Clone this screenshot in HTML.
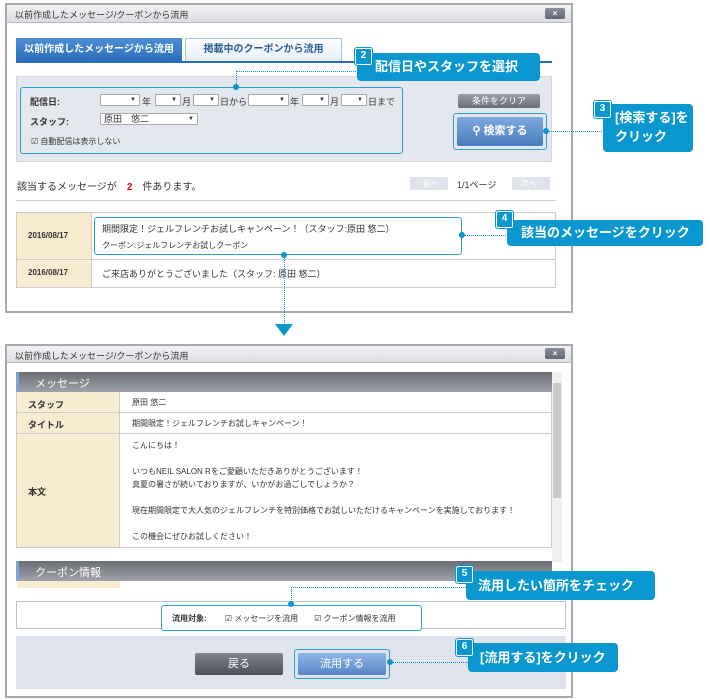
<!DOCTYPE html>
<html><head><meta charset="utf-8"><style>
*{margin:0;padding:0;box-sizing:border-box}
body{width:710px;height:700px;background:#fff;position:relative;overflow:hidden;font-family:"Liberation Sans","Noto Sans CJK JP",sans-serif;font-size:9px;color:#333}
.a{position:absolute}
.win{border:2px solid #a9aab0;background:#fff}
.tb{background:linear-gradient(#f3f3f5,#dcdde2);border-bottom:1px solid #b8b9c0;font-size:9px;padding:3px 0 0 8px;color:#333}
.x{background:linear-gradient(#8a8f9c,#5f6472);color:#fff;font-size:8px;text-align:center;border-radius:2px;line-height:11px;font-weight:bold}
.sel{border:1px solid #aaa;background:#fff;height:12px;font-size:6px;text-align:right;padding-right:3px;line-height:10px}
.co{background:#0a97cf;color:#fff;font-weight:bold;border-radius:4px;font-size:13px}
.bd{background:#0a97cf;border:1.5px solid #fff;color:#fff;font-weight:bold;font-size:10px;text-align:center;line-height:14px;width:17px;height:17px;border-radius:2px;outline:1px solid #0a97cf}
.dv{border-left:1px dotted #0a97cf}
.dh{border-top:1px dotted #0a97cf}
.dot{width:6px;height:6px;border-radius:3px;background:#0a97cf}
.hb{border:1.5px solid #2d9fd2;border-radius:3px}
.beige{background:#f8ecd0}
.gh{background:linear-gradient(#6b6e75,#9fa2a8);border-left:3px solid #7aa7d8;color:#fff;font-size:11px;padding:3px 0 0 16px}
</style></head><body>

<!-- window 1 -->
<div class="a win" style="left:5px;top:3px;width:568px;height:310px"></div>
<div class="a tb" style="left:7px;top:5px;width:564px;height:18px">以前作成したメッセージ/クーポンから流用</div>
<div class="a x" style="left:545px;top:8px;width:20px;height:11px">×</div>

<div class="a" style="left:16px;top:38px;width:166px;height:24px;background:linear-gradient(#4d8fd6,#2a6cb8);color:#fff;font-weight:bold;font-size:10px;text-align:center;line-height:24px">以前作成したメッセージから流用</div>
<div class="a" style="left:185px;top:38px;width:157px;height:24px;background:linear-gradient(#fff,#e3eefa);border:1px solid #9fc2e7;color:#2a5c98;font-weight:bold;font-size:10px;text-align:center;line-height:22px">掲載中のクーポンから流用</div>
<div class="a" style="left:16px;top:61px;width:536px;height:2px;background:#2a6cb8"></div>

<div class="a" style="left:16px;top:76px;width:536px;height:86px;background:#e4e7ee;border:1px solid #d2d6de"></div>
<div class="a hb" style="left:20px;top:87px;width:383px;height:67px"></div>
<div class="a" style="left:30px;top:95px;font-weight:bold">配信日:</div>
<div class="a sel" style="left:100px;top:94px;width:40px">▼</div><div class="a" style="left:142px;top:95px">年</div>
<div class="a sel" style="left:155px;top:94px;width:26px">▼</div><div class="a" style="left:182px;top:95px">月</div>
<div class="a sel" style="left:193px;top:94px;width:26px">▼</div><div class="a" style="left:220px;top:95px">日から</div>
<div class="a sel" style="left:248px;top:94px;width:41px">▼</div><div class="a" style="left:290px;top:95px">年</div>
<div class="a sel" style="left:302px;top:94px;width:27px">▼</div><div class="a" style="left:330px;top:95px">月</div>
<div class="a sel" style="left:341px;top:94px;width:26px">▼</div><div class="a" style="left:368px;top:95px">日まで</div>
<div class="a" style="left:30px;top:115px;font-weight:bold">スタッフ:</div>
<div class="a sel" style="left:100px;top:113px;width:98px;text-align:left;font-size:9px;padding-left:3px">原田　悠二<span style="position:absolute;right:3px;font-size:6px">▼</span></div>
<div class="a" style="left:31px;top:136px;font-size:8px">☑ 自動配信は表示しない</div>
<div class="a" style="left:458px;top:94px;width:82px;height:14px;background:linear-gradient(#9a9fab,#676c78);color:#fff;font-size:9px;text-align:center;line-height:14px;border-radius:2px">条件をクリア</div>
<div class="a hb" style="left:453px;top:113px;width:94px;height:37px"></div>
<div class="a" style="left:457px;top:117px;width:86px;height:29px;background:linear-gradient(#7fa8dc,#4a7cc0);color:#fff;font-size:11px;font-weight:bold;text-align:center;line-height:29px;border-radius:2px">⚲ 検索する</div>

<div class="a" style="left:17px;top:178px;font-size:10px">該当するメッセージが　<b style="color:#e00">2</b>　件あります。</div>
<div class="a" style="left:410px;top:177px;width:38px;height:13px;background:#dfe2ea;color:#fff;font-size:8px;text-align:center;line-height:13px">‹ 前へ</div>
<div class="a" style="left:457px;top:178px;font-size:9px">1/1ページ</div>
<div class="a" style="left:512px;top:177px;width:38px;height:13px;background:#dfe2ea;color:#fff;font-size:8px;text-align:center;line-height:13px">次へ ›</div>
<div class="a" style="left:16px;top:200px;width:540px;height:1px;background:#ccc"></div>

<div class="a" style="left:16px;top:212px;width:540px;height:76px;border:1px solid #ccc"></div>
<div class="a beige" style="left:17px;top:213px;width:74px;height:74px"></div>
<div class="a" style="left:17px;top:259px;width:538px;height:1px;background:#ccc"></div>
<div class="a" style="left:91px;top:213px;width:1px;height:74px;background:#ccc"></div>
<div class="a" style="left:28px;top:231px;font-weight:bold;font-size:8px">2016/08/17</div>
<div class="a" style="left:28px;top:268px;font-weight:bold;font-size:8px">2016/08/17</div>
<div class="a hb" style="left:94px;top:217px;width:368px;height:38px;background:#fff"></div>
<div class="a" style="left:102px;top:222px;font-size:9px">期間限定！ジェルフレンチお試しキャンペーン！（スタッフ:原田 悠二）</div>
<div class="a" style="left:102px;top:240px;font-size:8px">クーポン:ジェルフレンチお試しクーポン</div>
<div class="a" style="left:102px;top:267px;font-size:9px">ご来店ありがとうございました（スタッフ: 原田 悠二）</div>

<!-- callouts window1 -->
<div class="a dv" style="left:236px;top:71px;height:17px"></div>
<div class="a dh" style="left:236px;top:71px;width:120px"></div>
<div class="a dot" style="left:233px;top:84px"></div>
<div class="a co" style="left:357px;top:53px;width:183px;height:28px;line-height:28px;padding-left:18px">配信日やスタッフを選択</div>
<div class="a bd" style="left:355px;top:48px">2</div>
<div class="a dh" style="left:546px;top:131px;width:60px"></div>
<div class="a dot" style="left:543px;top:128px"></div>
<div class="a co" style="left:603px;top:104px;width:90px;height:48px;padding:4px 0 0 12px;line-height:19px">[検索する]を<br>クリック</div>
<div class="a bd" style="left:594px;top:101px">3</div>
<div class="a dh" style="left:462px;top:235px;width:48px"></div>
<div class="a dot" style="left:459px;top:232px"></div>
<div class="a co" style="left:507px;top:220px;width:196px;height:26px;line-height:26px;padding-left:14px">該当のメッセージをクリック</div>
<div class="a bd" style="left:496px;top:211px">4</div>
<div class="a dv" style="left:284px;top:255px;height:68px"></div>
<div class="a dot" style="left:281px;top:252px"></div>
<div class="a" style="left:275px;top:324px;width:0;height:0;border-left:9px solid transparent;border-right:9px solid transparent;border-top:12px solid #0a97cf"></div>

<!-- window 2 -->
<div class="a win" style="left:5px;top:344px;width:568px;height:354px"></div>
<div class="a tb" style="left:7px;top:346px;width:564px;height:17px">以前作成したメッセージ/クーポンから流用</div>
<div class="a x" style="left:545px;top:348px;width:20px;height:11px">×</div>

<div class="a gh" style="left:16px;top:372px;width:536px;height:20px">メッセージ</div>
<div class="a" style="left:552px;top:372px;width:10px;height:190px;background:#f0f0f0"></div>
<div class="a" style="left:553px;top:383px;width:8px;height:115px;background:#c8c8c8"></div>
<div class="a" style="left:16px;top:392px;width:536px;height:156px;border:1px solid #ccc;border-top:none"></div>
<div class="a beige" style="left:17px;top:392px;width:102px;height:155px"></div>
<div class="a" style="left:119px;top:392px;width:1px;height:155px;background:#ccc"></div>
<div class="a" style="left:17px;top:412px;width:535px;height:1px;background:#ccc"></div>
<div class="a" style="left:17px;top:433px;width:535px;height:1px;background:#ccc"></div>
<div class="a" style="left:28px;top:398px;font-weight:bold">スタッフ</div>
<div class="a" style="left:28px;top:418px;font-weight:bold">タイトル</div>
<div class="a" style="left:28px;top:485px;font-weight:bold">本文</div>
<div class="a" style="left:132px;top:397px;font-size:8px">原田 悠二</div>
<div class="a" style="left:132px;top:418px;font-size:8px">期間限定！ジェルフレンチお試しキャンペーン！</div>
<div class="a" style="left:132px;top:439px;line-height:13px;font-size:8px">こんにちは！<br><br>いつもNEIL SALON Rをご愛顧いただきありがとうございます！<br>真夏の暑さが続いておりますが、いかがお過ごしでしょうか？<br><br>現在期間限定で大人気のジェルフレンチを特別価格でお試しいただけるキャンペーンを実施しております！<br><br>この機会にぜひお試しください！</div>
<div class="a gh" style="left:16px;top:561px;width:536px;height:20px">クーポン情報</div>
<div class="a beige" style="left:17px;top:581px;width:103px;height:7px"></div>

<div class="a" style="left:16px;top:601px;width:550px;height:28px;border:1px solid #b8c4d6"></div>
<div class="a hb" style="left:161px;top:605px;width:261px;height:26px;background:#fff"></div>
<div class="a" style="left:172px;top:613px;font-size:8px"><b>流用対象:</b>　　 ☑ メッセージを流用　　☑ クーポン情報を流用</div>

<div class="a" style="left:16px;top:636px;width:550px;height:53px;background:#dfe3eb"></div>
<div class="a" style="left:195px;top:653px;width:88px;height:22px;background:linear-gradient(#808590,#4a4e58);color:#fff;font-size:11px;text-align:center;line-height:22px;border-radius:2px">戻る</div>
<div class="a hb" style="left:294px;top:649px;width:96px;height:30px"></div>
<div class="a" style="left:298px;top:653px;width:88px;height:22px;background:linear-gradient(#8fb5e6,#5686c8);color:#fff;font-size:11px;text-align:center;line-height:22px;border-radius:2px">流用する</div>

<div class="a dv" style="left:291px;top:587px;height:19px"></div>
<div class="a dh" style="left:291px;top:587px;width:175px"></div>
<div class="a dot" style="left:288px;top:601px"></div>
<div class="a co" style="left:466px;top:571px;width:189px;height:29px;line-height:29px;padding-left:12px">流用したい箇所をチェック</div>
<div class="a bd" style="left:456px;top:566px">5</div>
<div class="a dh" style="left:390px;top:662px;width:80px"></div>
<div class="a dot" style="left:387px;top:659px"></div>
<div class="a co" style="left:468px;top:643px;width:150px;height:29px;line-height:29px;padding-left:12px">[流用する]をクリック</div>
<div class="a bd" style="left:456px;top:639px">6</div>
</body></html>
